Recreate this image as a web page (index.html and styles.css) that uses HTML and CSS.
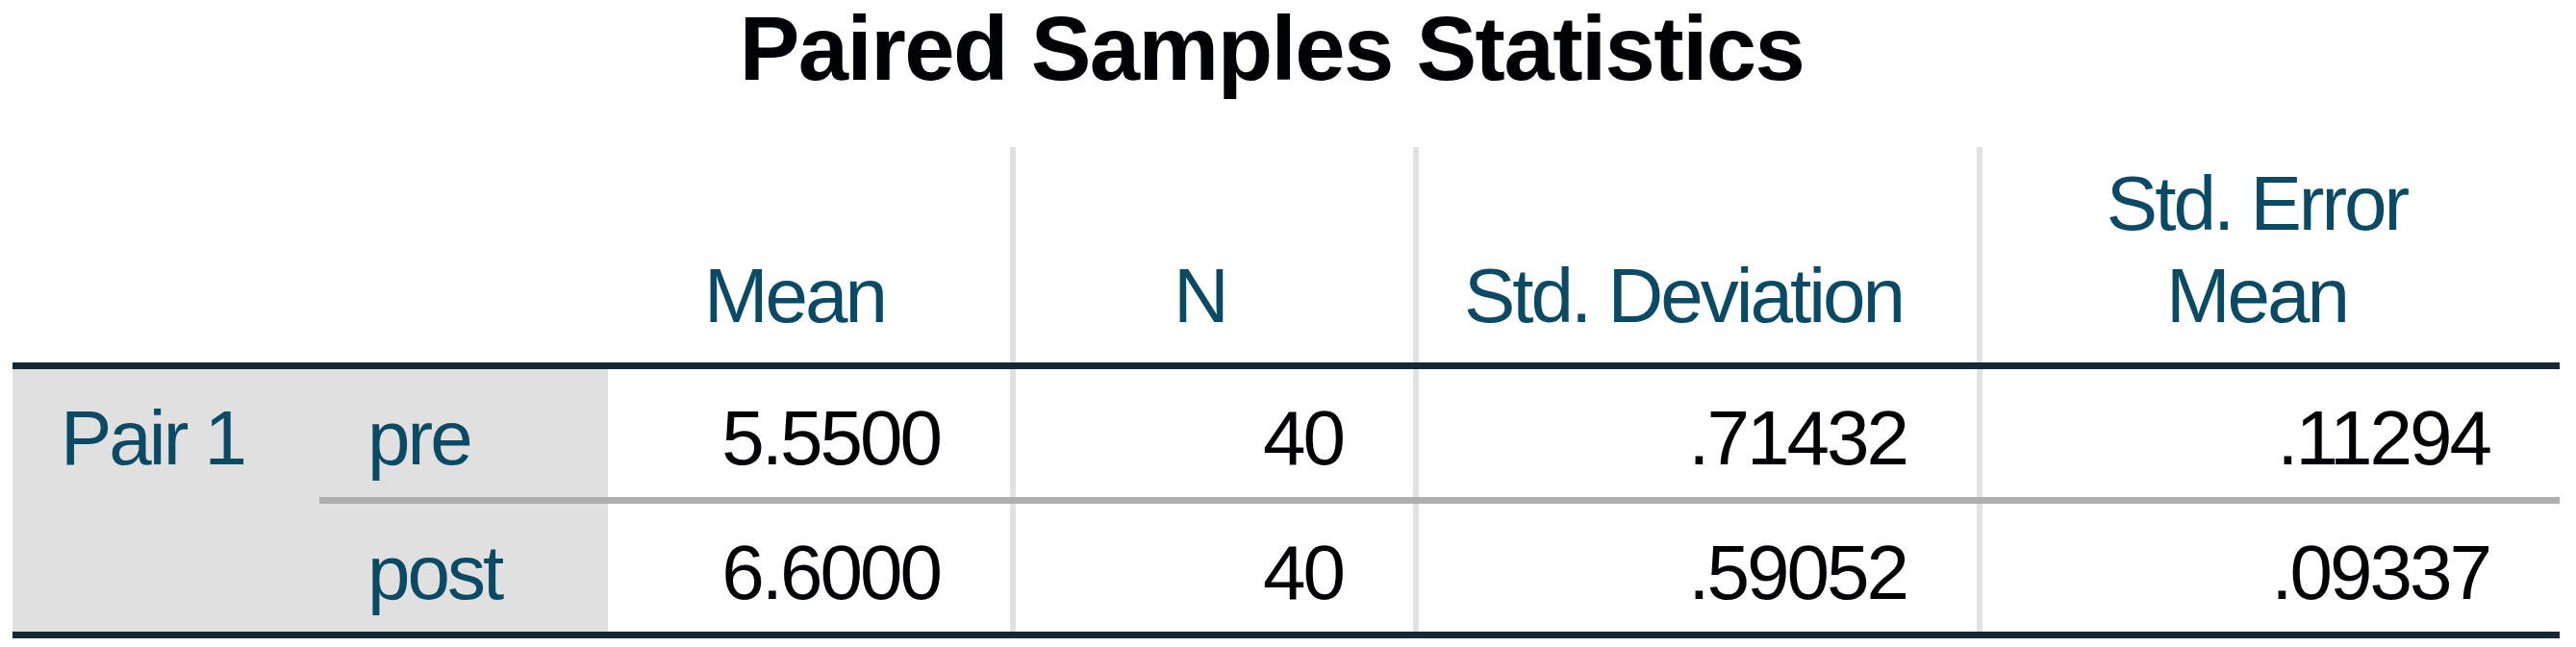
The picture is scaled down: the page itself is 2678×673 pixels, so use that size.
FILE: index.html
```html
<!DOCTYPE html>
<html lang="en">
  <head>
    <meta charset="UTF-8" />
    <meta name="viewport" content="width=device-width, initial-scale=1.0" />
    <title>Paired Samples Statistics</title>
    <link rel="stylesheet" href="styles.css">
  </head>
  <body>
    <div class="output">
      <h1 class="title">Paired Samples Statistics</h1>
      <table class="stats">
        <colgroup>
          <col class="c-pair" />
          <col class="c-var" />
          <col class="c-mean" />
          <col class="c-n" />
          <col class="c-sd" />
          <col class="c-se" />
        </colgroup>
        <thead>
          <tr>
            <th class="corner"></th>
            <th class="corner"></th>
            <th class="head">Mean</th>
            <th class="head line">N</th>
            <th class="head line">Std. Deviation</th>
            <th class="head line">Std. Error<br />Mean</th>
          </tr>
        </thead>
        <tbody>
          <tr>
            <th class="label pair" rowspan="2">Pair 1</th>
            <th class="label">pre</th>
            <td>5.5500</td>
            <td class="line">40</td>
            <td class="line">.71432</td>
            <td class="line">.11294</td>
          </tr>
          <tr class="second">
            <th class="label">post</th>
            <td>6.6000</td>
            <td class="line">40</td>
            <td class="line">.59052</td>
            <td class="line">.09337</td>
          </tr>
        </tbody>
      </table>
    </div>
  </body>
</html>
```

FILE: styles.css
```css
* {
  margin: 0;
  padding: 0;
  box-sizing: border-box;
}
body {
  background-color: #ffffff;
  font-family: "Liberation Sans", Arial, sans-serif;
}
.output {
  padding-left: 13px;
}
.title {
  width: 2648px;
  padding-right: 30px;
  font-size: 94px;
  font-weight: bold;
  letter-spacing: -1.5px;
  line-height: 108px;
  text-align: center;
  color: #010205;
  margin-top: -3px;
  margin-bottom: 48px;
}

.stats {
  width: 2648px;
  table-layout: fixed;
  border-collapse: collapse;
  font-size: 80px;
  line-height: 96px;
  letter-spacing: -3px;
}
.c-pair { width: 319px; }
.c-var { width: 300px; }
.c-mean { width: 421px; }
.c-n { width: 419px; }
.c-sd { width: 586px; }
.c-se { width: 603px; }

.stats th,
.stats td {
  font-weight: normal;
}
.stats .line {
  border-left: 6px solid #e2e2e2;
}
.head {
  height: 227px;
  vertical-align: bottom;
  text-align: center;
  padding: 0 30px 21px 0;
  color: #0a4a64;
}
.stats tbody {
  border-top: 7px solid #152935;
  border-bottom: 7px solid #152935;
}
.label {
  background-color: #e0e0e0;
  color: #0a4a64;
  text-align: left;
  vertical-align: top;
  padding: 24px 0 13px 50px;
}
.stats td {
  text-align: right;
  vertical-align: top;
  padding: 24px 73px 13px 0;
  color: #010205;
}
.second th,
.second td {
  border-top: 7px solid #aeaeae;
}
```
